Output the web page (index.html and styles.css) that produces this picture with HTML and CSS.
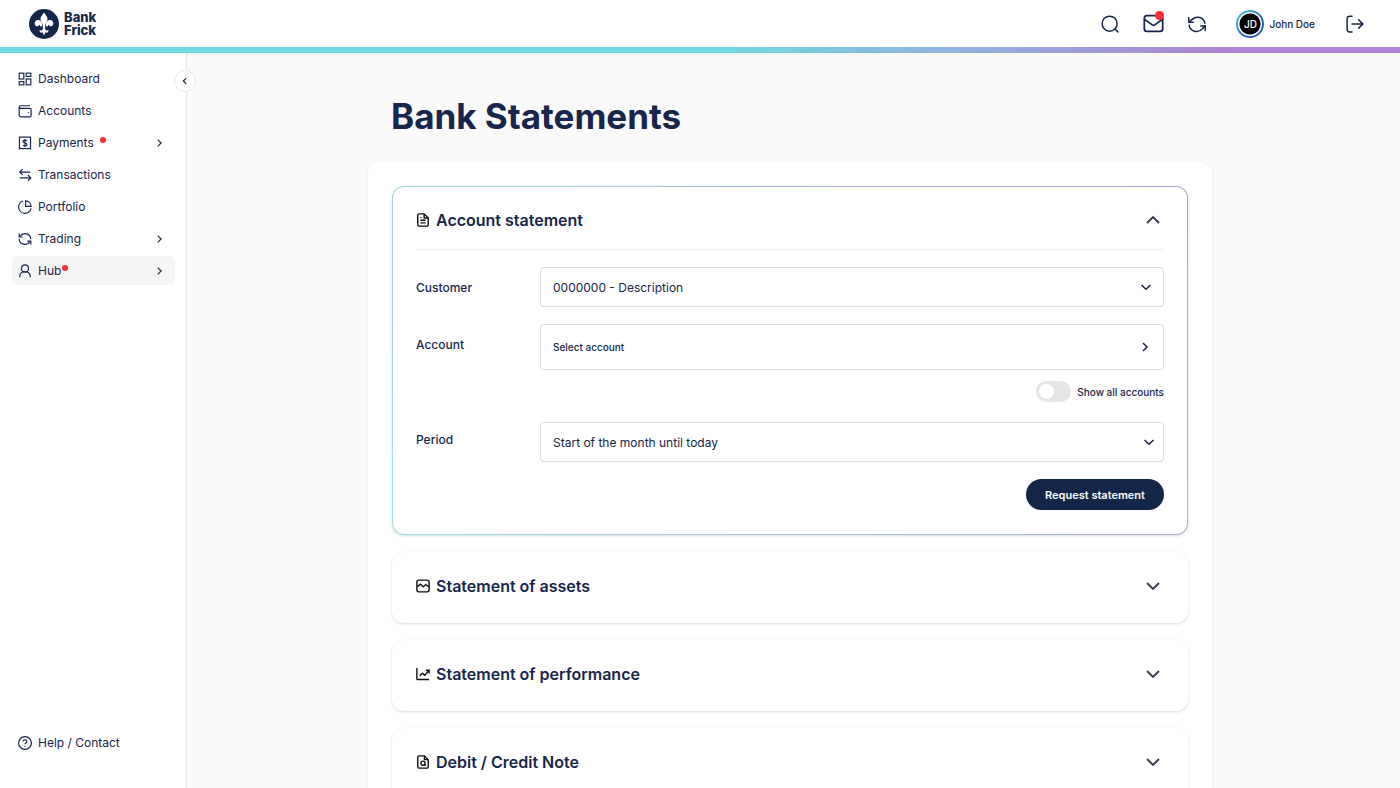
FILE: index.html
```html
<!DOCTYPE html>
<html lang="en">
<head>
<meta charset="utf-8">
<title>Bank Statements</title>
<link rel="stylesheet" href="styles.css">
</head>
<body>
<div class="app">
  <header class="topbar">
    <a class="brand" href="#" aria-label="Bank Frick">
      <svg class="brand-mark" viewBox="0 0 30 30">
        <circle cx="15" cy="15" r="15" fill="#14254a"/>
        <g fill="#fff">
          <path d="M15 3.600c-1.500 2.400-3.500 4-3.500 6.600 0 2.600 2.200 3.800 2.700 6.800h1.600c.5-3 2.700-4.200 2.700-6.800 0-2.600-2-4.200-3.500-6.600z"/>
          <path d="M13.300 17.300c0-3.900-1.800-6.200-4.200-6.200-2.100 0-3.400 1.500-3.400 3.300 0 1.700 1.100 2.900 2.500 2.900 1.100 0 1.700-.7 1.700-1.600 1 .2 1.500 1 1.500 1.900z"/>
          <path d="M16.700 17.300c0-3.900 1.800-6.200 4.200-6.200 2.100 0 3.400 1.500 3.400 3.300 0 1.700-1.100 2.900-2.500 2.900-1.100 0-1.700-.7-1.700-1.600-1 .2-1.500 1-1.500 1.900z"/>
          <path d="M13.800 19.200c-.1 1.500-.6 2.300-1.700 2.300-.6 0-1-.4-1-1-.9.900-.8 3 1.200 3.200 1.200.1 1.600-.4 1.600-.4.100 1.300.6 2.200 1.100 3.100.5-.9 1-1.800 1.100-3.100 0 0 .4.500 1.600.4 2-.2 2.100-2.300 1.200-3.200 0 .6-.4 1-1 1-1.100 0-1.600-.8-1.700-2.300z"/>
          <circle cx="15" cy="18" r="1.300"/>
        </g>
      </svg>
      <span class="brand-name"><span>Bank</span><span>Frick</span></span>
    </a>
    <div class="tools">
      <button class="tool" type="button" aria-label="Search">
        <svg class="icon icon-lg" viewBox="0 0 24 24"><circle cx="11.500" cy="11.500" r="10"/><path d="M19 19l3.500 3.500"/></svg>
      </button>
      <button class="tool" type="button" aria-label="Messages">
        <svg class="icon icon-xl" viewBox="0 0 24 24"><rect x="1.500" y="3" width="21" height="18" rx="3"/><path d="M2 7.500l8.600 6.100a2.400 2.400 0 0 0 2.800 0L22 7.500"/></svg>
        <span class="dot dot-tool"></span>
      </button>
      <button class="tool" type="button" aria-label="Refresh">
        <svg class="icon icon-lg" viewBox="0 0 24 24"><path d="M1 3.500v6h6"/><path d="M6 5.500A10 10 0 0 1 22.500 11"/><path d="M23 20.500v-6h-6"/><path d="M23 14.500l-4 4A10 10 0 0 1 1.500 13.500M1 9.500l5-4"/></svg>
      </button>
      <button class="user" type="button"><span class="avatar">JD</span>John Doe</button>
      <button class="tool" type="button" aria-label="Log out">
        <svg class="icon icon-lg" viewBox="0 0 24 24"><path d="M8 1.500H5a3.500 3.500 0 0 0-3.500 3.500v14A3.500 3.500 0 0 0 5 22.500h3"/><path d="M8 12h14.500M17 6.500l5.500 5.500-5.500 5.500"/></svg>
      </button>
    </div>
  </header>
  <div class="stripe"></div>

  <div class="body">
    <aside class="sidebar">
      <button class="collapse" type="button" aria-label="Collapse menu"><svg class="icon chev-sm" viewBox="0 0 24 24"><path d="M15 5l-7 7 7 7"/></svg></button>
      <nav class="nav">
        <a class="item" href="#"><svg class="icon" viewBox="0 0 24 24"><rect x="2" y="2" width="8" height="10"/><rect x="14" y="2" width="8" height="5.500"/><rect x="2" y="16.500" width="8" height="5.500"/><rect x="14" y="12" width="8" height="10"/></svg>Dashboard</a>
        <a class="item" href="#"><svg class="icon" viewBox="0 0 24 24"><path d="M20.500 3H4.500a2.200 2.200 0 0 0 0 4.400h15.500a2.500 2.500 0 0 1 2.500 2.500v9.600A2.500 2.500 0 0 1 20 22H5a3 3 0 0 1-3-3V5.500"/><path d="M17 14.500h1.500"/></svg>Accounts</a>
        <a class="item" href="#"><svg class="icon" viewBox="0 0 24 24"><path d="M2.500 2h19v20l-3.200-1-3.100 1-3.200-1-3.200 1-3.100-1-3.200 1z"/><path d="M15.500 8.500c-.8-1-2-1.500-3.500-1.500-2 0-3.500.9-3.500 2.500 0 3.500 7 1.500 7 5 0 1.600-1.500 2.500-3.500 2.500-1.500 0-2.800-.5-3.500-1.500M12 5v14"/></svg>Payments<span class="dot dot-far"></span><svg class="icon chev-sm" viewBox="0 0 24 24"><path d="M9 4l8 8-8 8"/></svg></a>
        <a class="item" href="#"><svg class="icon" viewBox="0 0 24 24"><path d="M21 7H3M8 2L3 7l5 5"/><path d="M3 17h18M17 12l5 5-5 5"/></svg>Transactions</a>
        <a class="item" href="#"><svg class="icon" viewBox="0 0 24 24"><path d="M22.500 14.500A10.800 10.800 0 1 1 9 1.800"/><path d="M13 1.500a10 10 0 0 1 9.500 9.500H13z"/></svg>Portfolio</a>
        <a class="item" href="#"><svg class="icon" viewBox="0 0 24 24"><path d="M2 2.500v6h6"/><path d="M3.500 7.500a10 10 0 0 1 18.500 5"/><path d="M22 21.500v-6h-6"/><path d="M20.500 16.500A10 10 0 0 1 2 11.500"/></svg>Trading<svg class="icon chev-sm" viewBox="0 0 24 24"><path d="M9 4l8 8-8 8"/></svg></a>
        <a class="item item-active" href="#"><svg class="icon" viewBox="0 0 24 24"><circle cx="12" cy="7.500" r="6"/><path d="M3 22.500v-1.500a7.500 7.500 0 0 1 7.500-7.500h3A7.500 7.500 0 0 1 21 21v1.500"/></svg>Hub<span class="dot dot-near"></span><svg class="icon chev-sm" viewBox="0 0 24 24"><path d="M9 4l8 8-8 8"/></svg></a>
      </nav>
      <a class="item" href="#"><svg class="icon" viewBox="0 0 24 24"><circle cx="12" cy="12" r="11"/><path d="M9 9.500a3 3 0 1 1 4.500 2.600c-1 .6-1.500 1-1.500 2.100M12 16.500v2"/></svg>Help / Contact</a>
    </aside>

    <main class="main">
      <div class="content">
        <h1 class="title">Bank Statements</h1>
        <div class="panel">
          <section class="card card-open">
            <h2 class="card-title"><button class="card-head" type="button" aria-expanded="true">
              <svg class="icon icon-dark" viewBox="0 0 24 24"><path d="M14 1.500H5.500A2.500 2.500 0 0 0 3 4v16a2.500 2.500 0 0 0 2.500 2.500h13A2.500 2.500 0 0 0 21 20V8.500z"/><path d="M14 1.500V8.500h7M7.500 8h2M7.500 12.500h9M7.500 17h9"/></svg>
              <span>Account statement</span>
              <svg class="icon chev-lg" viewBox="0 0 24 24"><path d="M4 16l8-8 8 8"/></svg>
            </button></h2>
            <form class="form">
              <label class="label" for="customer">Customer</label>
              <div class="select-wrap">
                <select class="field" id="customer"><option>0000000 - Description</option></select>
                <svg class="icon field-chev field-chev-in" viewBox="0 0 24 24"><path d="M3 8l9 8.500L21 8"/></svg>
              </div>
              <label class="label label-account" for="account">Account</label>
              <div class="account">
                <button class="field field-button" id="account" type="button">Select account<svg class="icon chev-md" viewBox="0 0 24 24"><path d="M8 4l8 8-8 8"/></svg></button>
                <label class="toggle"><input class="switch" type="checkbox" role="switch">Show all accounts</label>
              </div>
              <label class="label label-period" for="period">Period</label>
              <div class="select-wrap">
                <select class="field" id="period"><option>Start of the month until today</option></select>
                <svg class="icon field-chev" viewBox="0 0 24 24"><path d="M3 8l9 8.500L21 8"/></svg>
              </div>
              <button class="submit" type="button">Request statement</button>
            </form>
          </section>
          <section class="card">
            <h2 class="card-title"><button class="card-head" type="button" aria-expanded="false">
              <svg class="icon icon-dark" viewBox="0 0 24 24"><rect x="1.500" y="2" width="21" height="20" rx="3.500"/><path d="M2 13.500l5.500-4.500 5 4.500 4-4 6 4"/></svg>
              <span>Statement of assets</span>
              <svg class="icon chev-lg" viewBox="0 0 24 24"><path d="M4 8l8 8 8-8"/></svg>
            </button></h2>
          </section>
          <section class="card">
            <h2 class="card-title"><button class="card-head" type="button" aria-expanded="false">
              <svg class="icon icon-dark" viewBox="0 0 24 24"><path d="M1.500 1.500V20A1.500 1.500 0 0 0 3 21.500h19.500"/><path d="M6.500 15.500l4.500-5 4 3.500L22 6M17 5.500h5.500V11"/></svg>
              <span>Statement of performance</span>
              <svg class="icon chev-lg" viewBox="0 0 24 24"><path d="M4 8l8 8 8-8"/></svg>
            </button></h2>
          </section>
          <section class="card">
            <h2 class="card-title"><button class="card-head" type="button" aria-expanded="false">
              <svg class="icon icon-dark" viewBox="0 0 24 24"><path d="M14.500 1.500H5.500A2.500 2.500 0 0 0 3 4v16a2.500 2.500 0 0 0 2.500 2.500h13A2.500 2.500 0 0 0 21 20V8z"/><path d="M14.500 1.500V8H21"/><circle cx="12" cy="14" r="3.500"/><path d="M14.500 16.500l2.500 2"/></svg>
              <span>Debit / Credit Note</span>
              <svg class="icon chev-lg" viewBox="0 0 24 24"><path d="M4 8l8 8 8-8"/></svg>
            </button></h2>
          </section>
        </div>
      </div>
    </main>
  </div>
</div>
</body>
</html>
```
FILE: styles.css
```css
* { box-sizing: border-box; }

body {
  margin: 0;
  font-family: Inter, "Liberation Sans", sans-serif;
  font-size: 12px;
  color: #17264a;
  background: #fff;
}

button, select, input { font: inherit; color: inherit; }
button { border: 0; padding: 0; background: none; cursor: pointer; }
a { color: inherit; text-decoration: none; }

.app { display: flex; flex-direction: column; height: 100vh; }

.icon {
  flex: none;
  display: block;
  width: 14px;
  height: 14px;
  fill: none;
  stroke: currentColor;
  stroke-width: 2;
}
.icon-lg { width: 18px; height: 18px; stroke-linecap: round; stroke-linejoin: round; }
.icon-xl { width: 21px; height: 21px; stroke-linecap: round; stroke-linejoin: round; }
.icon-dark { color: #111; stroke-width: 2.4; }
.chev-sm { width: 10px; height: 10px; stroke-width: 3; color: #222b3d; }
.chev-md { width: 12px; height: 12px; stroke-width: 3; }
.chev-lg { width: 18px; height: 18px; margin-left: auto; margin-right: 2px; stroke-width: 2.5; color: #333c4c; }

.dot { width: 6px; height: 6px; border-radius: 50%; background: #fb2c36; }

/* Top bar */
.topbar {
  flex: none;
  display: flex;
  align-items: center;
  justify-content: space-between;
  height: 47px;
  padding: 0 36px 0 29px;
}
.brand { display: flex; align-items: center; gap: 5px; }
.brand-mark { width: 30px; height: 30px; }
.brand-name {
  display: flex;
  flex-direction: column;
  font-size: 13px;
  line-height: 13px;
  font-weight: 800;
}
.tools { display: flex; align-items: center; gap: 24px; }
.tool { position: relative; }
.dot-tool { position: absolute; top: -2px; right: 0; width: 9px; height: 9px; }
.user {
  display: flex;
  align-items: center;
  gap: 5px;
  margin: 0 7px 0 6px;
  font-size: 10px;
  font-weight: 500;
}
.avatar {
  display: grid;
  place-items: center;
  width: 28px;
  height: 28px;
  border: 2px solid transparent;
  border-radius: 50%;
  background:
    radial-gradient(circle, #000 10px, #fff 11px) padding-box,
    linear-gradient(135deg, #5ed0d8, #2d68b8 60%) border-box;
  color: #fff;
}
.stripe {
  flex: none;
  height: 6px;
  background: linear-gradient(90deg, #72d8e3 52%, #b183d4 88%);
}

/* Layout */
.body { flex: 1; display: flex; min-height: 0; }

.sidebar {
  position: relative;
  flex: none;
  display: flex;
  flex-direction: column;
  justify-content: space-between;
  width: 187px;
  padding: 11px 11px 31px 12px;
  border-right: 1px solid #e8e8ea;
}
.collapse {
  position: absolute;
  top: 17px;
  right: -10px;
  display: grid;
  place-items: center;
  width: 22px;
  height: 22px;
  border: 1px solid #e8e8ea;
  border-radius: 50%;
  background: #fff;
}
.nav { display: flex; flex-direction: column; gap: 3px; }
.item {
  display: flex;
  align-items: center;
  gap: 6px;
  height: 29px;
  padding: 0 11px 0 6px;
  border-radius: 5px;
}
.item-active { background: #f5f5f5; }
.item .chev-sm { margin-left: auto; }
.dot-far { margin-bottom: 6px; }
.dot-near { margin: 0 0 6px -5px; }

.main {
  flex: 1;
  min-width: 0;
  overflow-y: auto;
  scrollbar-width: none;
  padding: 39px 7px 24px 0;
  background: #fafafa;
}
.content { max-width: 844px; margin: 0 auto; }
.title {
  margin: 0 0 22px 23px;
  font-size: 35px;
  line-height: 48px;
  font-weight: 700;
}
.panel {
  display: flex;
  flex-direction: column;
  gap: 17px;
  padding: 24px;
  border-radius: 12px;
  background: #fff;
  box-shadow: 0 1px 4px rgba(0, 0, 0, 0.06);
}

/* Cards */
.card {
  padding: 21px 23px 24px;
  border: 1px solid transparent;
  border-radius: 12px;
  background: #fff;
  box-shadow: 0 1px 3px rgba(0, 0, 0, 0.14);
}
.card-open {
  background:
    linear-gradient(#fff, #fff) padding-box,
    linear-gradient(60deg, #9fe0e0, #b0a0d8) border-box;
}
.card-title { margin: 0; font-size: 16px; line-height: 24px; font-weight: 600; }
.card-head {
  display: flex;
  align-items: center;
  gap: 6px;
  width: 100%;
  text-align: left;
}
.card-open .card-head { padding-bottom: 17px; border-bottom: 1px solid #ededf0; }

/* Form */
.form {
  display: grid;
  grid-template-columns: 112px minmax(0, 1fr);
  column-gap: 12px;
  padding-top: 17px;
}
.label { line-height: 42px; font-weight: 500; }
.label-account { padding-top: 15px; }
.label-period { line-height: 36px; }
.field {
  width: 100%;
  height: 40px;
  padding: 0 12px;
  border: 1px solid #dcdee3;
  border-radius: 3px;
  background: #fff;
  appearance: none;
}
.select-wrap { display: grid; align-items: center; height: 40px; }
.select-wrap > * { grid-area: 1 / 1; }
.field-chev {
  justify-self: end;
  width: 12px;
  height: 12px;
  margin-right: 9px;
  stroke-width: 3;
  pointer-events: none;
}
.field-chev-in { margin-right: 12px; }
.account { display: grid; padding: 15px 0 20px; }
.field-button {
  display: flex;
  align-items: center;
  justify-content: space-between;
  height: 46px;
  font-size: 10px;
  font-weight: 500;
}
.toggle {
  display: flex;
  align-items: center;
  justify-self: end;
  gap: 6px;
  margin-top: 11px;
  font-size: 10px;
  font-weight: 500;
}
.switch {
  appearance: none;
  display: flex;
  align-items: center;
  width: 35px;
  height: 21px;
  margin: 0;
  padding: 3px;
  border-radius: 11px;
  background: #e5e5e5;
}
.switch::before {
  content: "";
  width: 15px;
  height: 15px;
  border-radius: 50%;
  background: #fff;
}
.switch:checked { background: #14254a; justify-content: flex-end; }
.submit {
  grid-column: 2;
  justify-self: end;
  height: 31px;
  margin: 17px 0 0;
  padding: 0 19px;
  border-radius: 16px;
  background: #14254a;
  color: #fff;
  font-size: 11px;
  font-weight: 600;
}
```
